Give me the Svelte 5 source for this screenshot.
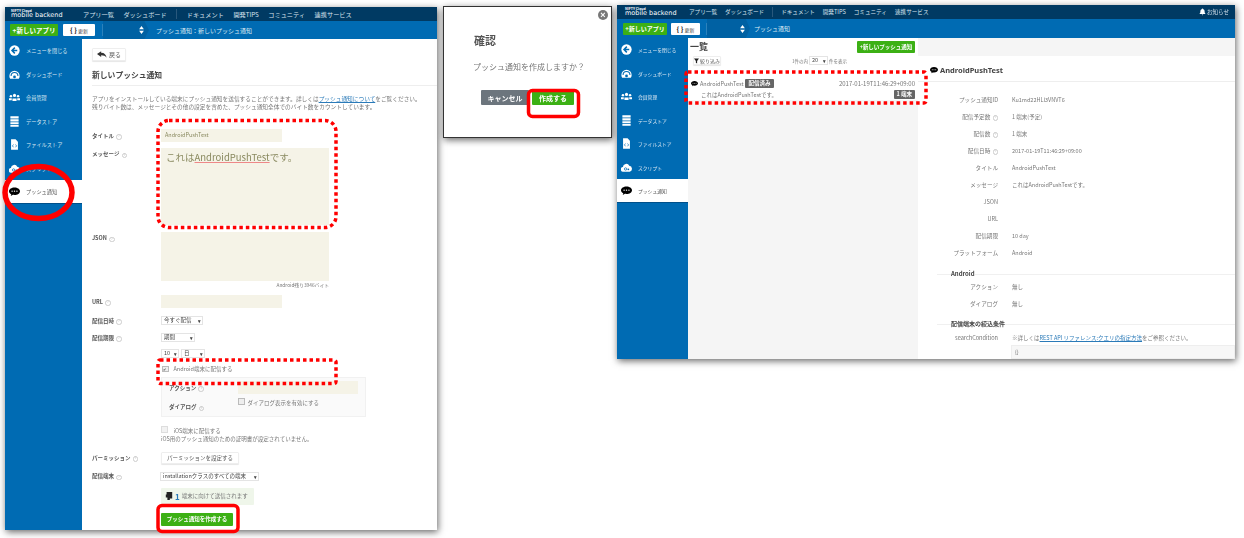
<script>
  const nav = ["アプリ一覧", "ダッシュボード"];
  const nav2 = ["ドキュメント", "開発TIPS", "コミュニティ", "連携サービス"];
  const menu = [
    { key: "back", label: "メニューを閉じる" },
    { key: "dash", label: "ダッシュボード" },
    { key: "users", label: "会員管理" },
    { key: "data", label: "データストア" },
    { key: "file", label: "ファイルストア" },
    { key: "script", label: "スクリプト" },
    { key: "push", label: "プッシュ通知", active: true },
  ];
  const details = [
    ["プッシュ通知ID", "Ku1md22HLl3VNVT6", false],
    ["配信予定数", "1 端末(予定)", true],
    ["配信数", "1 端末", true],
    ["配信日時", "2017-01-19T11:46:29+09:00", true],
    ["タイトル", "AndroidPushTest", false],
    ["メッセージ", "これはAndroidPushTestです。", false],
    ["JSON", "", false],
    ["URL", "", false],
    ["配信期限", "10 day", false],
    ["プラットフォーム", "Android", false],
  ];
</script>

{#snippet icon(key)}
  <svg class="mi" viewBox={key === "script" ? "2 2 12 12" : "0 0 16 16"}>
    {#if key === "back"}
      <circle cx="8" cy="8" r="7.5" fill="#fff" />
      <path d="M8.5 3.8 4.4 8l4.1 4.2M4.8 8H12" fill="none" stroke="#006bb3" stroke-width="2.2" />
    {:else if key === "dash"}
      <path d="M.5 10a7.5 7.5 0 0 1 15 0c0 1.600-.5 3-1.200 4H1.700C1 13 .5 11.600.5 10z" fill="#fff" />
      <path d="M3 10a5 5 0 0 1 10 0" fill="none" stroke="#006bb3" stroke-width="1.500" />
      <circle cx="8" cy="11.500" r="2" fill="#006bb3" />
    {:else if key === "users"}
      <circle cx="8" cy="5" r="2.300" fill="#fff" />
      <circle cx="2.800" cy="6" r="1.800" fill="#fff" />
      <circle cx="13.200" cy="6" r="1.800" fill="#fff" />
      <path d="M5 13V9.500h6V13zM0 12V9h4v3zM12 12V9h4v3z" fill="#fff" />
    {:else if key === "data"}
      <path d="M2 .5h12v3.300H2zM2 4.700h12V8H2zM2 9h12v3H2zM2 13h12v2.500H2z" fill="#fff" />
    {:else if key === "file"}
      <path d="M3 .5h6.500L13 4v11.500H3z" fill="#fff" />
      <path d="M6.500 8 5 10l1.500 2M9.500 8l1.500 2-1.500 2" fill="none" stroke="#006bb3" stroke-width="1" />
    {:else if key === "script"}
      <path d="M4.500 12.500a2.500 2.500 0 0 1-.4-5A3.600 3.600 0 0 1 11 6.200a3.200 3.200 0 0 1 .5 6.300z" fill="#fff" />
      <circle cx="7" cy="9.600" r="1.300" fill="none" stroke="#006bb3" stroke-width=".8" />
      <circle cx="10" cy="10" r="1" fill="#006bb3" />
    {:else}
      <use href="#bubble" />
    {/if}
  </svg>
{/snippet}

{#snippet chrome(navClass, crumb, btnClass)}
  <header class="top {navClass}">
    <div class="logo"><small>NIFTY Cloud</small><b>mobile backend</b></div>
    <nav class="links">
      {#each nav as n}<span>{n}</span>{/each}
      <i class="sep"></i>
      {#each nav2 as n}<span>{n}</span>{/each}
    </nav>
    {#if navClass === "wide"}
      <span class="notice">
        <svg viewBox="0 0 10 10" width="7" height="8"><path d="M5 0c.6 0 1 .4 1 .9 1.500.5 2 1.800 2 3.100 0 2 .5 3 1.500 4H.5C1.500 7 2 6 2 4c0-1.300.5-2.600 2-3.100C4 .4 4.400 0 5 0zM4 8.500h2L5 10z" fill="#fff" /></svg>
        お知らせ
      </span>
    {/if}
  </header>
  <div class="bar {btnClass}">
    <button class="green new">+新しいアプリ</button>
    <button class="refresh"><em>{"{ }"}</em> 更新</button>
    <i class="bar-sep"></i>
    <div class="picker">
      <svg viewBox="0 0 6 10" width="5" height="8"><path d="M3 0 6 4H0zM3 10 0 6h6z" fill="#fff" /></svg>
    </div>
    <span class="crumb">{crumb}</span>
  </div>
{/snippet}

{#snippet sidebar()}
  <aside class="side">
    {#each menu as m}
      <div class="item" class:active={m.active}>
        {@render icon(m.key)}
        <span>{m.label}</span>
      </div>
    {/each}
  </aside>
{/snippet}

{#snippet help()}
  <i class="q">?</i>
{/snippet}

<svg width="0" height="0" class="defs">
  <symbol id="bubble" viewBox="0 0 16 16">
    <path d="M8 2c4.400 0 8 2.400 8 5.500S12.400 13 8 13c-.8 0-1.600-.1-2.300-.2L2.500 14.500l.8-2.600C1.300 11 0 9.400 0 7.500 0 4.400 3.600 2 8 2z" fill="#000" />
    <circle cx="4.500" cy="7.500" r="1" fill="#fff" /><circle cx="8" cy="7.500" r="1" fill="#fff" /><circle cx="11.500" cy="7.500" r="1" fill="#fff" />
  </symbol>
</svg>

<div class="stage">
  <!-- left window: create form -->
  <section class="win win-form">
    {@render chrome("narrow", "プッシュ通知：新しいプッシュ通知", "bar-form")}
    <div class="body">
      {@render sidebar()}
      <main class="form-main">
        <button class="plain back">
          <svg viewBox="0 0 12 8" width="10" height="7"><path d="M5 0 0 3.500 5 7V5c3 0 5 .8 6.500 3C11 4.500 9 2 5 2z" fill="#333" /></svg>
          戻る
        </button>
        <h2>新しいプッシュ通知</h2>
        <p class="intro">アプリをインストールしている端末にプッシュ通知を送信することができます。詳しくは<a href="#a">プッシュ通知について</a>をご覧ください。<br />残りバイト数は、メッセージとその他の設定を含めた、プッシュ通知全体でのバイト数をカウントしています。</p>

        <div class="row r-title"><label>タイトル {@render help()}</label><div class="inp short">AndroidPushTest</div></div>
        <div class="row r-msg top-label"><label>メッセージ {@render help()}</label><div class="inp area msg">これは<u>AndroidPushTest</u>です。</div></div>
        <div class="row r-json top-label"><label>JSON {@render help()}</label><div class="inp area json"></div></div>
        <div class="count">Android残り3946バイト</div>
        <div class="row r-url"><label>URL {@render help()}</label><div class="inp short"></div></div>
        <div class="row r-when"><label>配信日時 {@render help()}</label><span class="sel s-when">今すぐ配信<b>▾</b></span></div>
        <div class="row r-limit"><label>配信期限 {@render help()}</label><span class="sel s-limit">期間<b>▾</b></span></div>
        <div class="row r-days"><label></label><span class="sel s-ten">10<b>▾</b></span><span class="sel s-day">日<b>▾</b></span></div>
        <div class="row r-android"><label></label><span class="check on">✔</span><span class="check-text">Android端末に配信する</span></div>
        <div class="row r-box">
          <label></label>
          <div class="subbox">
            <div class="sub-row r-action"><label>アクション {@render help()}</label><div class="inp action"></div></div>
            <div class="sub-row r-dialog"><label>ダイアログ {@render help()}</label><div class="dialog-opt"><span class="check"></span>ダイアログ表示を有効にする</div></div>
          </div>
        </div>
        <div class="row r-ios"><label></label><div class="ios"><div><span class="check dim"></span>iOS端末に配信する</div><div>iOS用のプッシュ通知のための証明書が設定されていません。</div></div></div>
        <div class="row r-perm"><label>パーミッション {@render help()}</label><button class="plain perm">パーミッションを設定する</button></div>
        <div class="row r-target"><label>配信端末 {@render help()}</label><span class="sel s-target">installationクラスのすべての端末<b>▾</b></span></div>
        <div class="row r-info"><label></label><div class="info"><svg viewBox="0 0 10 10" width="8" height="8"><path d="M2 0h7v8H6v2H3V7H1V3h1z" fill="#222" /></svg><b>1</b> 端末に向けて送信されます</div></div>
        <div class="row r-submit"><label></label><button class="green submit">プッシュ通知を作成する</button></div>
      </main>
    </div>
  </section>

  <!-- confirm modal -->
  <section class="win modal">
    <div class="close">×</div>
    <h3>確認</h3>
    <p>プッシュ通知を作成しますか？</p>
    <div class="modal-btns">
      <button class="cancel">キャンセル</button>
      <button class="green ok">作成する</button>
    </div>
  </section>

  <!-- right window: list and detail -->
  <section class="win win-list">
    {@render chrome("wide", "プッシュ通知", "bar-list")}
    <div class="body">
      {@render sidebar()}
      <div class="list-col">
        <div class="list-head">
          <div class="list-title"><h2>一覧</h2><button class="green new-push">+新しいプッシュ通知</button></div>
          <div class="list-tools">
            <button class="plain filter"><svg viewBox="0 0 8 8" width="5" height="6"><path d="M0 0h8L5 4v4L3 7V4z" fill="#222" /></svg> 絞り込み</button>
            <span class="per">1件の内 <span class="sel s-per">20<b>▾</b></span> 件を表示</span>
          </div>
        </div>
        <div class="list-row">
          <div class="line1">
            <svg class="small-b" viewBox="0 0 16 16"><use href="#bubble" /></svg>
            <span>AndroidPushTest</span><span class="badge">配信済み</span>
            <time>2017-01-19T11:46:29+09:00</time>
          </div>
          <div class="line2"><span>これはAndroidPushTestです。</span><span class="badge">1 端末</span></div>
        </div>
      </div>
      <div class="detail-col">
        <div class="detail">
          <h4><svg viewBox="0 0 16 16" width="8" height="8"><use href="#bubble" /></svg> AndroidPushTest</h4>
          <dl>
            {#each details as [k, v, q]}
              <div class="d-row"><dt>{k}{#if q}&nbsp;{@render help()}{/if}</dt><dd>{v}</dd></div>
            {/each}
          </dl>
          <h5>Android</h5>
          <dl>
            <div class="d-row"><dt>アクション</dt><dd>無し</dd></div>
            <div class="d-row"><dt>ダイアログ</dt><dd>無し</dd></div>
          </dl>
          <h5 class="cond">配信端末の絞込条件</h5>
          <div class="d-row search"><dt>searchCondition</dt><dd>※詳しくは<a href="#r">REST API リファレンス:クエリの指定方法</a>をご参照ください。</dd></div>
          <div class="code">{"{}"}</div>
        </div>
      </div>
    </div>
  </section>

  <!-- hand-drawn red annotations over the screenshots -->
  <svg class="marks" width="1244" height="538" viewBox="0 0 1244 538">
    <g fill="none" stroke="#f00">
      <ellipse cx="38.500" cy="192.500" rx="33.500" ry="26" stroke-width="5.500" />
      <g stroke-width="3.500" stroke-dasharray="3.500 3">
        <rect x="158" y="120.500" width="178" height="107" rx="11" />
        <rect x="158" y="360" width="178" height="23.500" rx="2" />
        <rect x="686" y="72" width="240" height="31" rx="2" />
      </g>
      <g stroke-width="3.500">
        <rect x="158" y="505.500" width="80" height="26" rx="4" />
        <rect x="528.500" y="90.500" width="50" height="26" rx="4" />
      </g>
    </g>
  </svg>
</div>

<style>
  :global(body) {
    margin: 0;
    background: #fff;
  }
  .defs {
    position: absolute;
  }
  .stage {
    position: relative;
    width: 1244px;
    height: 538px;
    overflow: hidden;
    font-family: "Noto Sans CJK JP", "Noto Sans", sans-serif;
    color: #777;
    font-size: 6px;
  }
  .marks {
    position: absolute;
    left: 0;
    top: 0;
  }
  button {
    font: inherit;
    padding: 0;
    border: 0;
    cursor: pointer;
  }
  h2, h3, h4, h5, p, dl, dd {
    margin: 0;
  }

  /* windows placed on the canvas */
  .win {
    position: absolute;
    background: #fff;
    box-shadow: 1px 2px 7px rgba(0, 0, 0, 0.6);
    overflow: hidden;
    display: flex;
    flex-direction: column;
    filter: blur(0.35px);
  }
  .win-form {
    left: 5px;
    top: 7px;
    width: 432px;
    height: 523px;
  }
  .win-list {
    left: 617px;
    top: 5px;
    width: 618px;
    height: 354px;
  }
  .modal {
    left: 443px;
    top: 6px;
    width: 167px;
    height: 130px;
    border: 1px solid #333;
    display: block;
  }

  /* top chrome */
  .top {
    height: 14px;
    flex: none;
    background: #003a63;
    color: #d8e4ee;
    display: flex;
    align-items: center;
    font-size: 6.200px;
  }
  .logo {
    display: flex;
    flex-direction: column;
    flex: none;
    line-height: 5px;
    margin-left: 6px;
    width: 72px;
    color: #fff;
  }
  .logo small {
    font-size: 3.500px;
    font-weight: 700;
    line-height: 3.500px;
  }
  .logo b {
    font-family: "DejaVu Sans", sans-serif;
    font-size: 6.500px;
    font-weight: 400;
    line-height: 7px;
    white-space: nowrap;
  }
  .links {
    display: flex;
    align-items: center;
    gap: 9.500px;
    white-space: nowrap;
  }
  .sep {
    width: 1px;
    height: 10px;
    background: #29587c;
  }
  .wide .logo {
    margin-left: 8px;
    width: 64px;
  }
  .wide .links {
    font-size: 5.600px;
    gap: 8px;
  }
  .notice {
    margin-left: auto;
    margin-right: 6px;
    display: flex;
    align-items: center;
    gap: 1px;
    font-size: 5.500px;
  }
  .bar {
    height: 18px;
    flex: none;
    background: #006bb3;
    display: flex;
    align-items: center;
    color: #dbe8f2;
    font-size: 6px;
    position: relative;
  }
  .bar-list {
    height: 19px;
  }
  .green {
    background: #3cb014;
    color: #fff;
    font-weight: 700;
    border-radius: 1px;
    white-space: nowrap;
  }
  .new {
    width: 48px;
    height: 12px;
    margin-left: 5px;
    font-size: 6.500px;
  }
  .refresh {
    width: 32px;
    height: 12px;
    margin-left: 5px;
    background: #fff;
    color: #444;
    border-radius: 1px;
    font-size: 5px;
  }
  .refresh em {
    font-style: normal;
    font-weight: 700;
    font-size: 7px;
    color: #222;
  }
  .bar-sep {
    width: 1px;
    height: 12px;
    margin-left: 7px;
    background: #2c82bc;
  }
  .picker {
    height: 18px;
    width: 46px;
    background: #0061a3;
    clip-path: polygon(0 0, 90% 0, 100% 50%, 90% 100%, 0 100%);
    display: flex;
    align-items: center;
    justify-content: flex-end;
    padding-right: 5px;
    box-sizing: border-box;
  }
  .crumb {
    margin-left: 7px;
    white-space: nowrap;
  }
  .bar-list .new {
    width: 44px;
    margin-left: 6px;
    font-size: 6px;
  }
  .bar-list .refresh {
    width: 29px;
    margin-left: 4px;
  }
  .bar-list .bar-sep {
    margin-left: 6px;
  }
  .bar-list .picker {
    height: 19px;
    width: 43px;
  }
  .bar-list .crumb {
    margin-left: 4px;
  }

  .body {
    flex: 1;
    display: flex;
    min-height: 0;
  }
  .side {
    width: 77px;
    flex: none;
    background: #006bb3;
    color: #dbe8f2;
    font-size: 5.200px;
  }
  .win-list .side {
    width: 71px;
    font-size: 4.800px;
  }
  .win-list .body {
    background: #f5f5f5;
  }
  .item {
    height: 23.500px;
    display: flex;
    align-items: center;
    padding-left: 4px;
    gap: 6px;
    white-space: nowrap;
    box-sizing: border-box;
  }
  .item.active {
    background: #fff;
    color: #555;
    border-bottom: 1px solid #00508a;
  }
  .mi {
    width: 11px;
    height: 11px;
    flex: none;
  }

  /* form */
  .form-main {
    flex: 1;
    padding: 9px 0 0 10px;
    display: flex;
    flex-direction: column;
    min-width: 0;
  }
  .plain {
    background: #fff;
    color: #555;
    border: 1px solid #eee;
    border-radius: 1px;
    box-shadow: 0 1px 1px rgba(0, 0, 0, 0.1);
    white-space: nowrap;
  }
  .back {
    width: 34px;
    height: 13px;
    display: flex;
    align-items: center;
    justify-content: center;
    gap: 2px;
    flex: none;
  }
  h2 {
    font-size: 7.800px;
    line-height: 10px;
    font-weight: 700;
    color: #444;
  }
  .form-main h2 {
    margin-top: 9px;
    padding-bottom: 5px;
    border-bottom: 1px solid #eee;
  }
  .intro {
    margin-top: 9px;
    line-height: 7.500px;
    font-size: 5.700px;
    white-space: nowrap;
    color: #777;
  }
  .intro a, .d-row a {
    color: #2a7ab8;
    text-decoration: underline;
  }
  .row {
    display: flex;
    align-items: center;
    flex: none;
    gap: 2px;
  }
  .row > label {
    width: 69px;
    margin-right: -2px;
    flex: none;
    font-weight: 700;
    color: #555;
    white-space: nowrap;
    font-size: 5.500px;
  }
  .top-label {
    align-items: flex-start;
  }
  .top-label > label {
    margin-top: 2px;
  }
  .q {
    display: inline-block;
    width: 3.500px;
    height: 3.500px;
    border: 0.5px solid #ccc;
    border-radius: 50%;
    font-size: 3px;
    line-height: 3.500px;
    text-align: center;
    font-style: normal;
    font-weight: 400;
    color: #aaa;
    margin-left: 1px;
    vertical-align: 0.5px;
  }
  .inp {
    background: #f5f3e7;
    color: #8a8a60;
    box-sizing: border-box;
  }
  .short {
    width: 121px;
    height: 13px;
    line-height: 13px;
    padding-left: 4px;
    font-size: 5.500px;
  }
  .area {
    width: 168px;
  }
  .msg {
    height: 77px;
    padding: 2px 5px;
    font-size: 9.500px;
    line-height: 14px;
    font-family: "Noto Sans CJK JP", sans-serif;
  }
  .msg u {
    text-decoration-color: #e88;
  }
  .json {
    height: 49px;
  }
  .r-title { margin-top: 19px; }
  .r-msg { margin-top: 6px; }
  .r-json { margin-top: 7px; }
  .count {
    width: 237px;
    text-align: right;
    font-size: 4.800px;
    line-height: 8px;
    flex: none;
  }
  .r-url { margin-top: 6px; }
  .r-when { margin-top: 8px; height: 9px; }
  .r-limit { margin-top: 8px; height: 9px; }
  .r-days { margin-top: 7px; height: 9px; }
  .r-android { margin-top: 6px; height: 10px; }
  .r-box { margin-top: 3px; align-items: flex-start; }
  .r-ios { margin-top: 9px; }
  .r-perm { margin-top: 9px; }
  .r-target { margin-top: 8px; height: 9px; }
  .r-info { margin-top: 7px; }
  .r-submit { margin-top: 8px; }
  .sel {
    height: 9px;
    box-sizing: border-box;
    border: 1px solid #e4e4e4;
    background: #fff;
    color: #444;
    font-size: 5.500px;
    line-height: 7px;
    padding: 0 1px 0 2px;
    display: flex;
    justify-content: space-between;
    white-space: nowrap;
  }
  .sel b {
    font-size: 5px;
  }
  .s-when { width: 42px; }
  .s-limit { width: 34px; }
  .s-ten { width: 18px; }
  .s-day { width: 24px; }
  .s-target { width: 99px; margin-left: -1px; }
  .check {
    width: 4.500px;
    height: 4.500px;
    border: 0.5px solid #bbb;
    display: inline-block;
    flex: none;
    background: #eee;
    font-size: 4px;
    line-height: 4.500px;
    color: #444;
    margin-right: 3px;
  }
  .check.on {
    margin-left: 1px;
  }
  .check.dim {
    margin-right: 6px;
    background: #f2f2f2;
    border-color: #ddd;
  }
  .check-text {
    font-size: 5.500px;
  }
  .subbox {
    width: 205px;
    height: 40px;
    background: #fafafa;
    border: 1px solid #f1f1f1;
    box-sizing: border-box;
    padding: 3px 7px;
    display: flex;
    flex-direction: column;
  }
  .sub-row {
    display: flex;
    align-items: center;
    font-weight: 700;
    color: #555;
    font-size: 5.500px;
  }
  .sub-row label {
    width: 69px;
    flex: none;
  }
  .action {
    width: 120px;
    height: 13px;
  }
  .r-dialog {
    margin-top: 3px;
    align-items: flex-start;
    padding-top: 3px;
  }
  .r-dialog label {
    margin-top: 3px;
  }
  .dialog-opt {
    font-weight: 400;
    color: #777;
    margin-top: -2px;
  }
  .ios {
    line-height: 8px;
    font-size: 5.500px;
  }
  .perm {
    width: 78px;
    height: 12px;
    font-size: 5.500px;
  }
  .info {
    width: 93px;
    height: 17px;
    background: #eff6ea;
    border-radius: 1px;
    display: flex;
    align-items: center;
    padding-left: 4px;
    box-sizing: border-box;
    gap: 2px;
    font-size: 5.500px;
  }
  .info b {
    font-size: 8px;
    color: #2a7ab8;
  }
  .submit {
    width: 72px;
    height: 13px;
    font-size: 5.500px;
  }

  /* modal */
  .close {
    position: absolute;
    right: 3px;
    top: 3px;
    width: 10px;
    height: 10px;
    border-radius: 50%;
    background: #777;
    color: #fff;
    font: 700 9px/10px "Liberation Sans", sans-serif;
    text-align: center;
  }
  .modal h3 {
    margin: 26px 0 0 30px;
    font-size: 11px;
    line-height: 14px;
    color: #555;
  }
  .modal p {
    margin: 14px 0 0 29px;
    font-size: 8px;
    line-height: 12px;
  }
  .modal-btns {
    display: flex;
    align-items: center;
    gap: 3px;
    margin: 17px 0 0 37px;
  }
  .cancel {
    width: 48px;
    height: 15px;
    background: #6c757d;
    color: #fff;
    font-weight: 700;
    font-size: 7px;
    border-radius: 1px;
  }
  .ok {
    width: 42px;
    height: 14px;
    font-size: 7px;
  }

  /* list */
  .list-col {
    width: 230px;
    flex: none;
  }
  .list-head {
    background: #fff;
    height: 38px;
    padding: 3px 3px 0 2px;
    box-sizing: border-box;
  }
  .list-title {
    display: flex;
    justify-content: space-between;
    align-items: flex-start;
  }
  .list-title h2 {
    font-size: 9px;
    line-height: 11px;
  }
  .new-push {
    width: 58px;
    height: 12px;
    font-size: 5.500px;
  }
  .list-tools {
    display: flex;
    align-items: center;
    margin: 3px 0 0 3px;
  }
  .filter {
    width: 28px;
    height: 9px;
    font-size: 5px;
    display: flex;
    align-items: center;
    justify-content: center;
    gap: 1px;
  }
  .per {
    margin-left: 71px;
    font-size: 4.500px;
    display: flex;
    align-items: center;
    gap: 1px;
    white-space: nowrap;
  }
  .s-per {
    width: 19px;
  }
  .list-row {
    background: #fff;
    height: 24px;
    padding: 2px 3px 0 3px;
    box-sizing: border-box;
    font-size: 5.500px;
  }
  .line1, .line2 {
    display: flex;
    align-items: center;
    gap: 2px;
    height: 11px;
    white-space: nowrap;
  }
  .small-b {
    width: 7px;
    height: 7px;
  }
  .line1 time {
    margin-left: auto;
    font-size: 6px;
  }
  .line2 {
    justify-content: space-between;
    padding-left: 10px;
  }
  .badge {
    background: #666;
    color: #fff;
    border-radius: 1px;
    padding: 0 3px;
    font-weight: 700;
    height: 9px;
    line-height: 9px;
    font-size: 5.500px;
  }

  /* detail */
  .detail-col {
    flex: 1;
    padding-top: 18px;
    min-width: 0;
  }
  .detail {
    background: #fff;
    height: 100%;
    overflow: hidden;
  }
  .detail h4 {
    margin: 0;
    height: 25px;
    line-height: 29px;
    padding-left: 12px;
    border-bottom: 1px solid #eee;
    font-size: 7.500px;
    color: #444;
    font-family: "Noto Sans", sans-serif;
    font-weight: 700;
  }
  .detail h4 svg {
    vertical-align: -1px;
  }
  .detail dl:first-of-type {
    margin-top: 9px;
  }
  .d-row {
    display: flex;
    height: 17px;
    align-items: center;
    font-size: 5.500px;
  }
  .d-row dt {
    width: 80px;
    text-align: right;
    flex: none;
    font-size: 5.600px;
    white-space: nowrap;
  }
  .d-row dd {
    margin-left: 14px;
    white-space: nowrap;
  }
  .detail h5 {
    margin: 9px 0 0 19px;
    font-size: 6px;
    line-height: 8px;
    color: #444;
    font-weight: 700;
    display: flex;
    align-items: center;
  }
  .detail h5::before {
    content: "";
    width: 14px;
    height: 1px;
    background: #f0f0f0;
  }
  .detail h5::after {
    content: "";
    flex: 1;
    height: 1px;
    background: #f0f0f0;
  }
  .detail h5.cond {
    margin-top: 8px;
  }
  .search {
    height: 14px;
    margin-top: 3px;
  }
  .code {
    margin-left: 93px;
    height: 14px;
    background: #f7f7f7;
    border: 1px solid #eee;
    padding-left: 3px;
    font-size: 5.500px;
    line-height: 12px;
    box-sizing: border-box;
  }
</style>
